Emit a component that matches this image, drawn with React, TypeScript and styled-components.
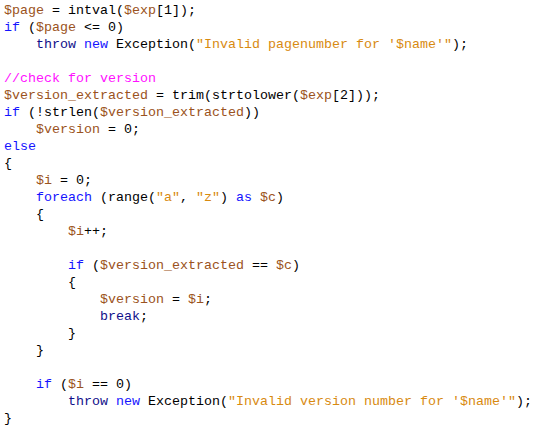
import React from "react";
import styled, { createGlobalStyle } from "styled-components";

const Global = createGlobalStyle`
  html, body { margin: 0; padding: 0; background: #ffffff; }
`;

type Kind = "v" | "k" | "n" | "s" | "c" | "p";

const colors: Record<Kind, string> = {
  v: "#9a5220",
  k: "#1414ff",
  n: "#10108a",
  s: "#d88a10",
  c: "#ff10ff",
  p: "#000000",
};

const Code = styled.pre`
  margin: 0;
  padding: 2px 0 0 4px;
  font-family: "Liberation Mono", "Courier New", monospace;
  font-size: 13.333px;
  line-height: 17px;
  color: #000;
  background: #fff;
`;

const Line = styled.div`
  height: 17px;
  white-space: pre;
`;

const Tok = styled.span<{ $k: Kind }>`
  color: ${(p) => colors[p.$k]};
`;

type T = [Kind, string];
const lines: T[][] = [
  [["v", "$page"], ["p", " = intval("], ["v", "$exp"], ["p", "[1]);"]],
  [["k", "if"], ["p", " ("], ["v", "$page"], ["p", " <= 0)"]],
  [["p", "    "], ["n", "throw"], ["p", " "], ["k", "new"], ["p", " Exception("], ["s", "\"Invalid pagenumber for '$name'\""], ["p", ");"]],
  [],
  [["c", "//check for version"]],
  [["v", "$version_extracted"], ["p", " = trim(strtolower("], ["v", "$exp"], ["p", "[2]));"]],
  [["k", "if"], ["p", " (!strlen("], ["v", "$version_extracted"], ["p", "))"]],
  [["p", "    "], ["v", "$version"], ["p", " = 0;"]],
  [["k", "else"]],
  [["p", "{"]],
  [["p", "    "], ["v", "$i"], ["p", " = 0;"]],
  [["p", "    "], ["k", "foreach"], ["p", " (range("], ["s", "\"a\""], ["p", ", "], ["s", "\"z\""], ["p", ") "], ["k", "as"], ["p", " "], ["v", "$c"], ["p", ")"]],
  [["p", "    {"]],
  [["p", "        "], ["v", "$i"], ["p", "++;"]],
  [],
  [["p", "        "], ["k", "if"], ["p", " ("], ["v", "$version_extracted"], ["p", " == "], ["v", "$c"], ["p", ")"]],
  [["p", "        {"]],
  [["p", "            "], ["v", "$version"], ["p", " = "], ["v", "$i"], ["p", ";"]],
  [["p", "            "], ["n", "break"], ["p", ";"]],
  [["p", "        }"]],
  [["p", "    }"]],
  [],
  [["p", "    "], ["k", "if"], ["p", " ("], ["v", "$i"], ["p", " == 0)"]],
  [["p", "        "], ["n", "throw"], ["p", " "], ["k", "new"], ["p", " Exception("], ["s", "\"Invalid version number for '$name'\""], ["p", ");"]],
  [["p", "}"]],
];

export default function App() {
  return (
    <>
      <Global />
      <Code>
        {lines.map((l, i) => (
          <Line key={i}>
            {l.map(([k, t], j) => (
              <Tok key={j} $k={k}>
                {t}
              </Tok>
            ))}
          </Line>
        ))}
      </Code>
    </>
  );
}
